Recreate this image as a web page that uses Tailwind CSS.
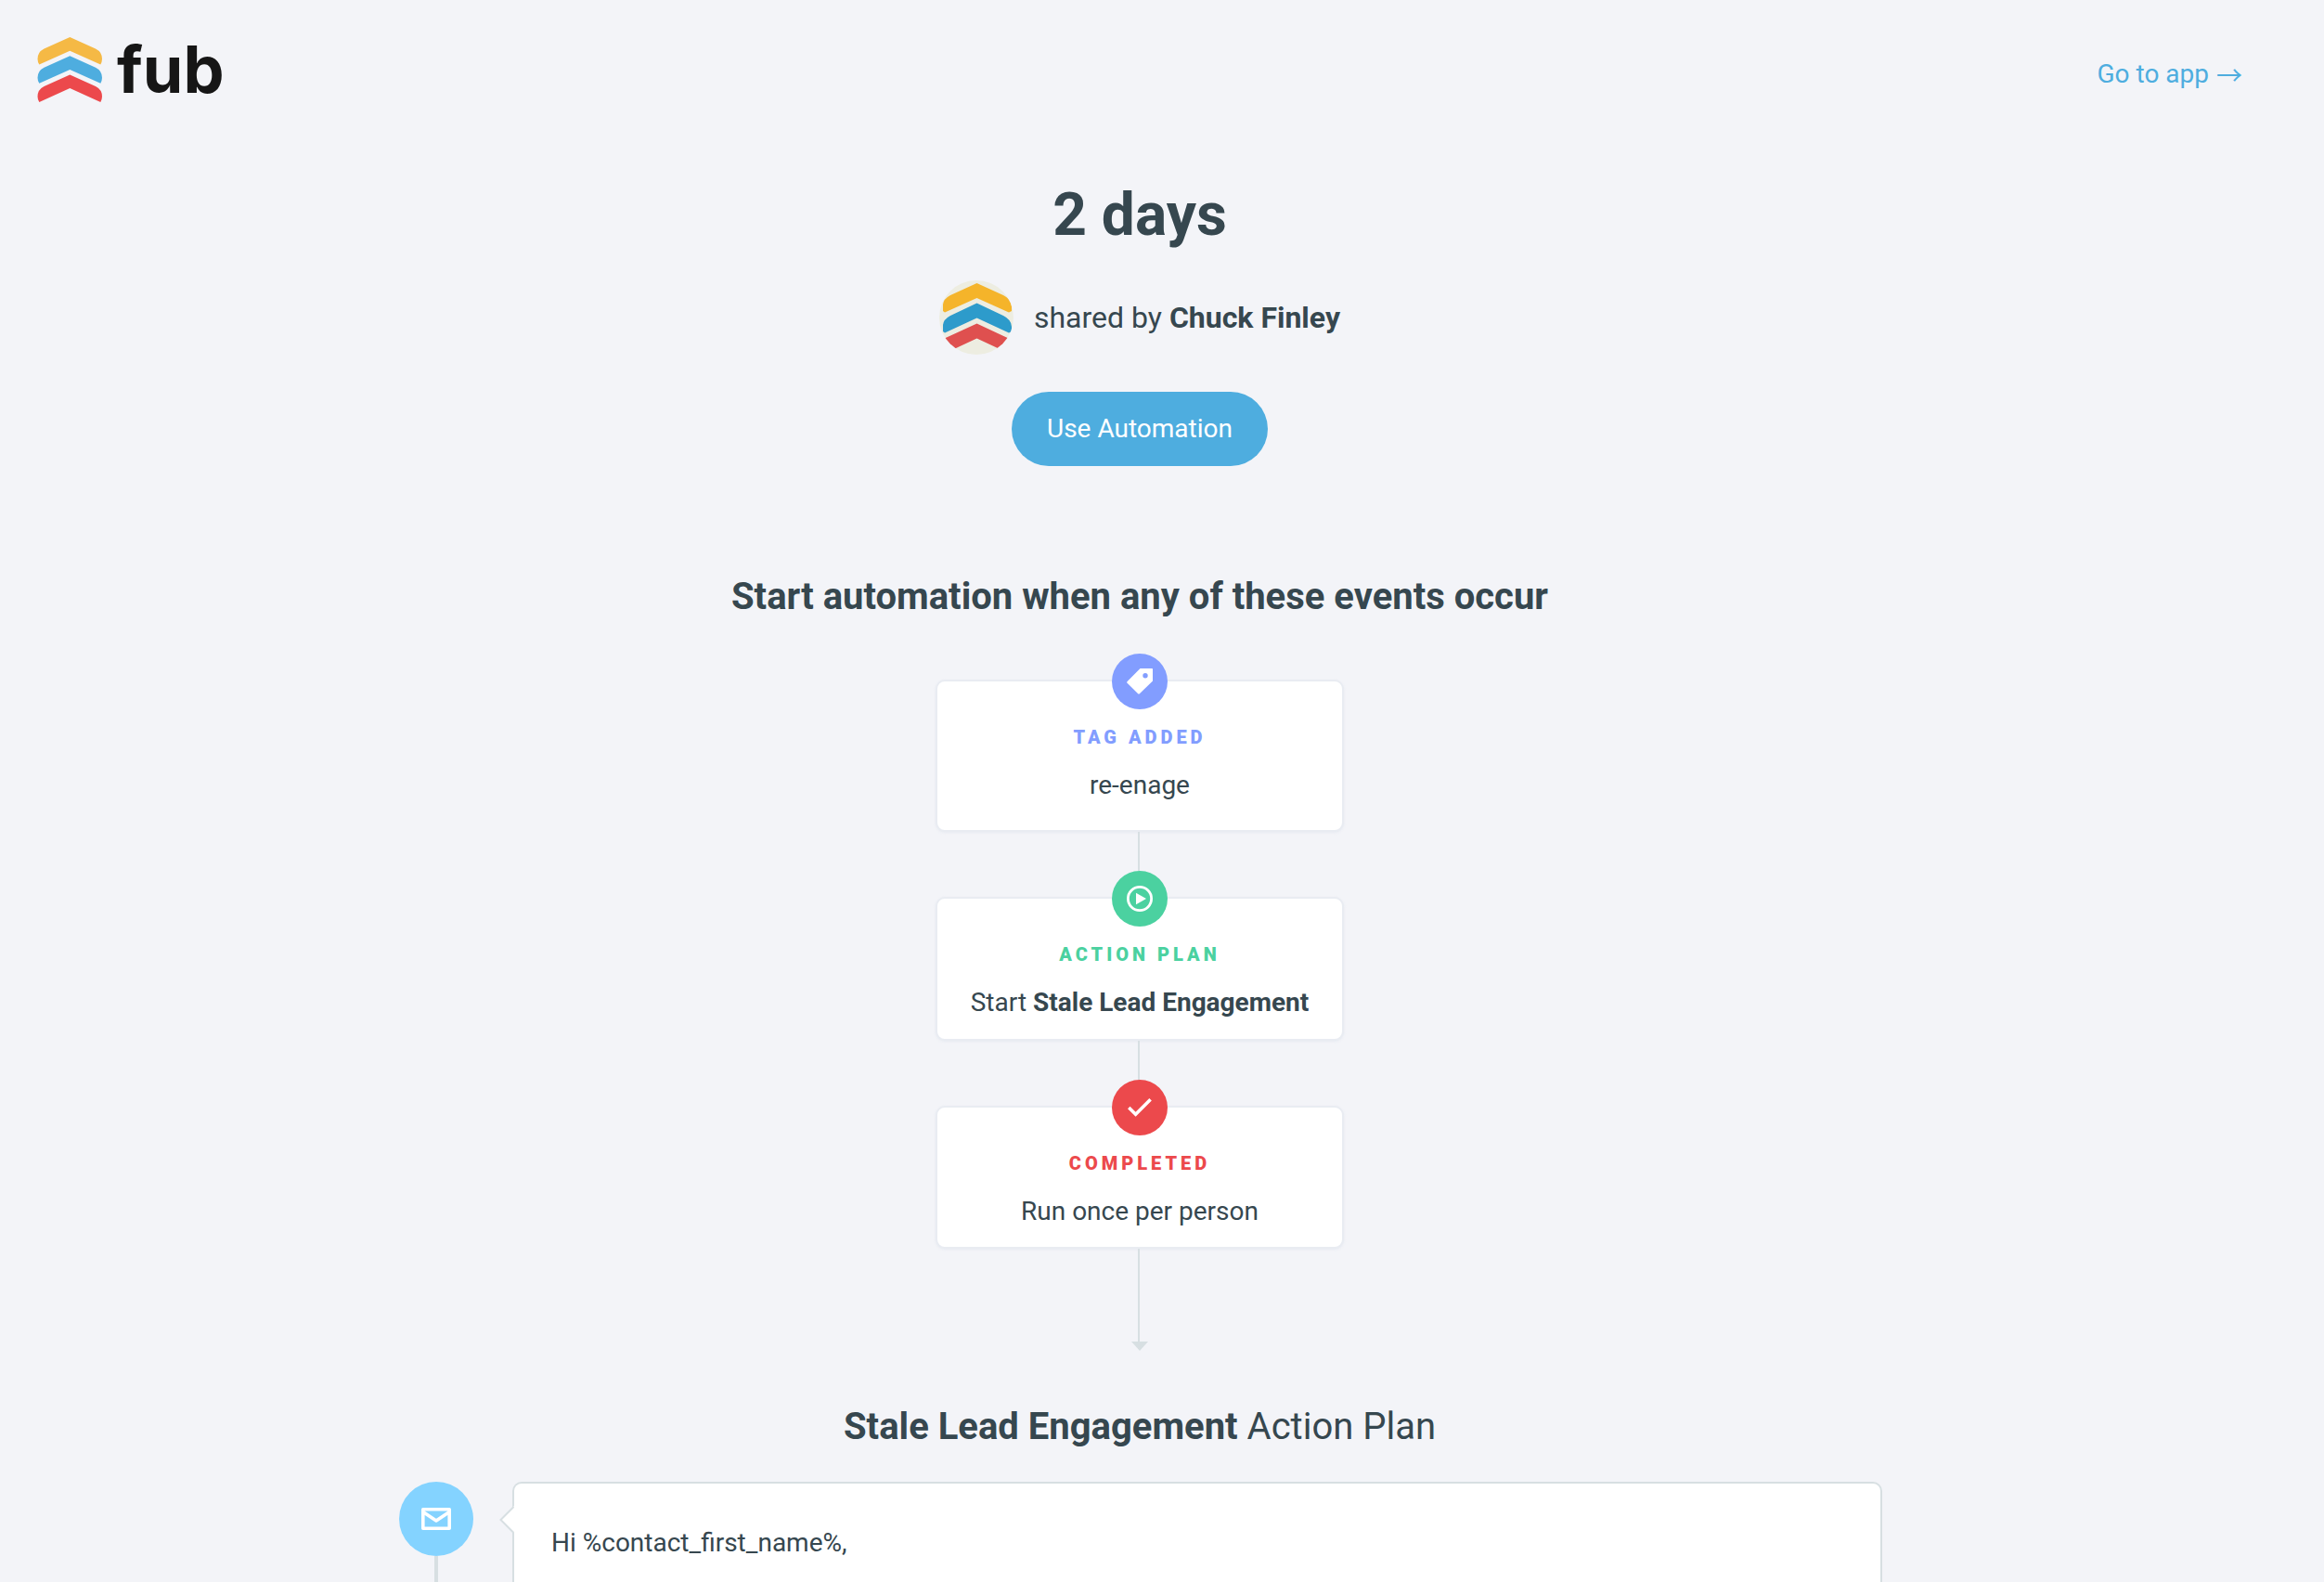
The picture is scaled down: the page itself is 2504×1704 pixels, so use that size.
<!DOCTYPE html>
<html lang="en">
<head>
<meta charset="utf-8">
<meta name="viewport" content="width=device-width, initial-scale=1">
<title>2 days – Follow Up Boss</title>
<script src="https://cdn.jsdelivr.net/npm/@tailwindcss/browser@4"></script>
</head>
<body class="flex min-h-screen flex-col overflow-x-hidden bg-[#f3f4f8] pr-12 font-[Roboto,sans-serif] text-[28px] leading-8 text-[#36474f]">

<header class="flex items-start justify-between pt-10 pl-10 pr-10">
  <a href="#" aria-label="fub" class="flex h-[70px] items-center gap-4 text-[#161616]">
    <svg class="size-[70px]" viewBox="0 0 70 70" aria-hidden="true">
      <path fill="#f5b945" d="M35.300 0 63 12.500Q70 16 70 23.500 70 26.500 68.300 29.500L35.300 14.700 2.300 29.500Q.5 26.500.5 23.500.5 16 7.500 12.500Z"/>
      <path fill="#4eaddf" d="M35.300 20.200 63 32.700Q70 36.200 70 43.700 70 46.700 68.300 49.700L35.300 34.900 2.300 49.700Q.5 46.700.5 43.700.5 36.200 7.500 32.700Z"/>
      <path fill="#ec494c" d="M35.300 40.400 63 52.900Q70 56.400 70 63.900 70 66.900 68.300 69.900L35.300 55.100 2.300 69.900Q.5 66.900.5 63.900.5 56.400 7.500 52.900Z"/>
    </svg>
    <span class="font-[Inter,sans-serif] text-[70px] leading-none font-bold">fub</span>
  </a>
  <a href="#" class="flex items-center gap-2 pt-6 text-[#4eaddf]">Go to app <span class="font-['Noto_Sans_CJK_SC',sans-serif]">→</span></a>
</header>

<main class="flex flex-1 flex-col items-center pt-[84px]">
  <h1 class="text-[64px] leading-[76px] font-bold">2 days</h1>

  <div class="mt-8 flex items-center gap-[22px] text-[32px] leading-10">
    <svg class="size-20 rounded-full" viewBox="0 0 80 80" aria-hidden="true">
      <rect width="80" height="80" fill="#edede1"/>
      <path fill="#f5b42a" d="M40.500 3 69 16Q78 20.500 78 28V33L75 34.500 40.500 19 6 34.500 4 33V26Q4.500 20 12 16Z"/>
      <path fill="#2d9bcb" d="M40.500 24.500 69 38Q78 42.500 78 50V55L75 56.500 40.500 40.500 6 56.500 4 55V48Q4.500 42 12 38Z"/>
      <path fill="#df504f" d="M40.500 46.500 80 65V73H63L40.500 62.500 18 73H0V65Z"/>
    </svg>
    <p>shared by <strong class="font-bold">Chuck Finley</strong></p>
  </div>

  <button type="button" class="mt-10 h-20 w-[276px] rounded-full bg-[#4eaddf] text-white">Use Automation</button>

  <h2 class="mt-[117px] text-[40px] leading-12 font-bold">Start automation when any of these events occur</h2>

  <ol class="mt-[37px] flex w-[440px] flex-col">
    <li class="flex flex-col items-center">
      <span class="z-10 -mb-8 flex size-[60px] items-center justify-center rounded-full bg-[#829dff]">
        <svg class="size-7" viewBox="0 0 28 28" aria-hidden="true"><path fill="#fff" fill-rule="evenodd" d="M14.500 0H27.200Q28 0 28 .8V13.500L14 27Q13 28 12 27L.6 15.800Q-.3 14.900.6 14ZM20 5.100a2.700 2.700 0 1 0 0 5.400 2.700 2.700 0 0 0 0-5.400Z"/></svg>
      </span>
      <div class="flex h-[164px] w-full flex-col items-center rounded-[10px] border-2 border-[#e9ecf2] bg-white pt-12 shadow-sm shadow-slate-200/60">
        <h3 class="text-xl leading-6 font-black tracking-[4px] text-[#829dff]">TAG ADDED</h3>
        <p class="mt-6">re-enage</p>
      </div>
      <span class="-ml-0.5 h-[42px] w-0.5 bg-[#d7dfe2]"></span>
    </li>
    <li class="flex flex-col items-center">
      <span class="z-10 -mb-8 flex size-[60px] items-center justify-center rounded-full bg-[#4bd1a0]">
        <svg class="size-7" viewBox="0 0 28 28" aria-hidden="true"><circle cx="14" cy="14" r="12.600" fill="none" stroke="#fff" stroke-width="2.800"/><path fill="#fff" d="M10 7.700 21 14 10 20.300Z"/></svg>
      </span>
      <div class="flex h-[155px] w-full flex-col items-center rounded-[10px] border-2 border-[#e9ecf2] bg-white pt-12 shadow-sm shadow-slate-200/60">
        <h3 class="text-xl leading-6 font-black tracking-[4px] text-[#4bd1a0]">ACTION PLAN</h3>
        <p class="mt-6">Start <strong class="font-bold">Stale Lead Engagement</strong></p>
      </div>
      <span class="-ml-0.5 h-[42px] w-0.5 bg-[#d7dfe2]"></span>
    </li>
    <li class="flex flex-col items-center">
      <span class="z-10 -mb-8 flex size-[60px] items-center justify-center rounded-full bg-[#ec494c]">
        <svg class="h-5 w-[26px]" viewBox="0 0 26 20" aria-hidden="true"><path fill="none" stroke="#fff" stroke-width="3.600" d="M1.300 10 8.600 17.200 24.600 1.300"/></svg>
      </span>
      <div class="flex h-[154px] w-full flex-col items-center rounded-[10px] border-2 border-[#e9ecf2] bg-white pt-12 shadow-sm shadow-slate-200/60">
        <h3 class="text-xl leading-6 font-black tracking-[4px] text-[#ec494c]">COMPLETED</h3>
        <p class="mt-6">Run once per person</p>
      </div>
      <span class="-ml-0.5 h-[100px] w-0.5 bg-[#d7dfe2]"></span>
      <svg class="h-2.5 w-[18px]" viewBox="0 0 18 10" aria-hidden="true"><path fill="#d7dfe2" d="M0 0H18L9 10Z"/></svg>
    </li>
  </ol>

  <h2 class="mt-[58px] text-[40px] leading-12"><strong class="font-bold">Stale Lead Engagement</strong> Action Plan</h2>

  <section class="mt-[35px] flex w-full max-w-[1600px] flex-1 gap-[42px]">
    <div class="ml-0.5 flex flex-col items-center">
      <span class="flex size-20 shrink-0 items-center justify-center rounded-full bg-[#84d3ff]">
        <svg class="h-[28px] w-8" viewBox="0 0 32 28" aria-hidden="true"><path fill="none" stroke="#fff" stroke-width="3.600" stroke-linejoin="round" d="M1.800 3.800H30.200V24.200H1.800ZM1.800 6.500 16 16 30.200 6.500"/></svg>
      </span>
      <span class="w-1 flex-1 bg-[#d7dfe2]"></span>
    </div>
    <article class="relative flex-1 rounded-t-[10px] border-2 border-b-0 border-[#d7dfe2] bg-white px-10 pt-12">
      <svg class="absolute top-6 -left-4 h-[30px] w-[17px]" viewBox="0 0 17 30" aria-hidden="true"><path fill="#fff" d="M17 0V30L1.500 15 16 0Z"/><path fill="none" stroke="#d7dfe2" stroke-width="2" d="M15.500 1 1.500 15 15.500 29"/></svg>
      <p>Hi %contact_first_name%,</p>
    </article>
  </section>
</main>
</body>
</html>
